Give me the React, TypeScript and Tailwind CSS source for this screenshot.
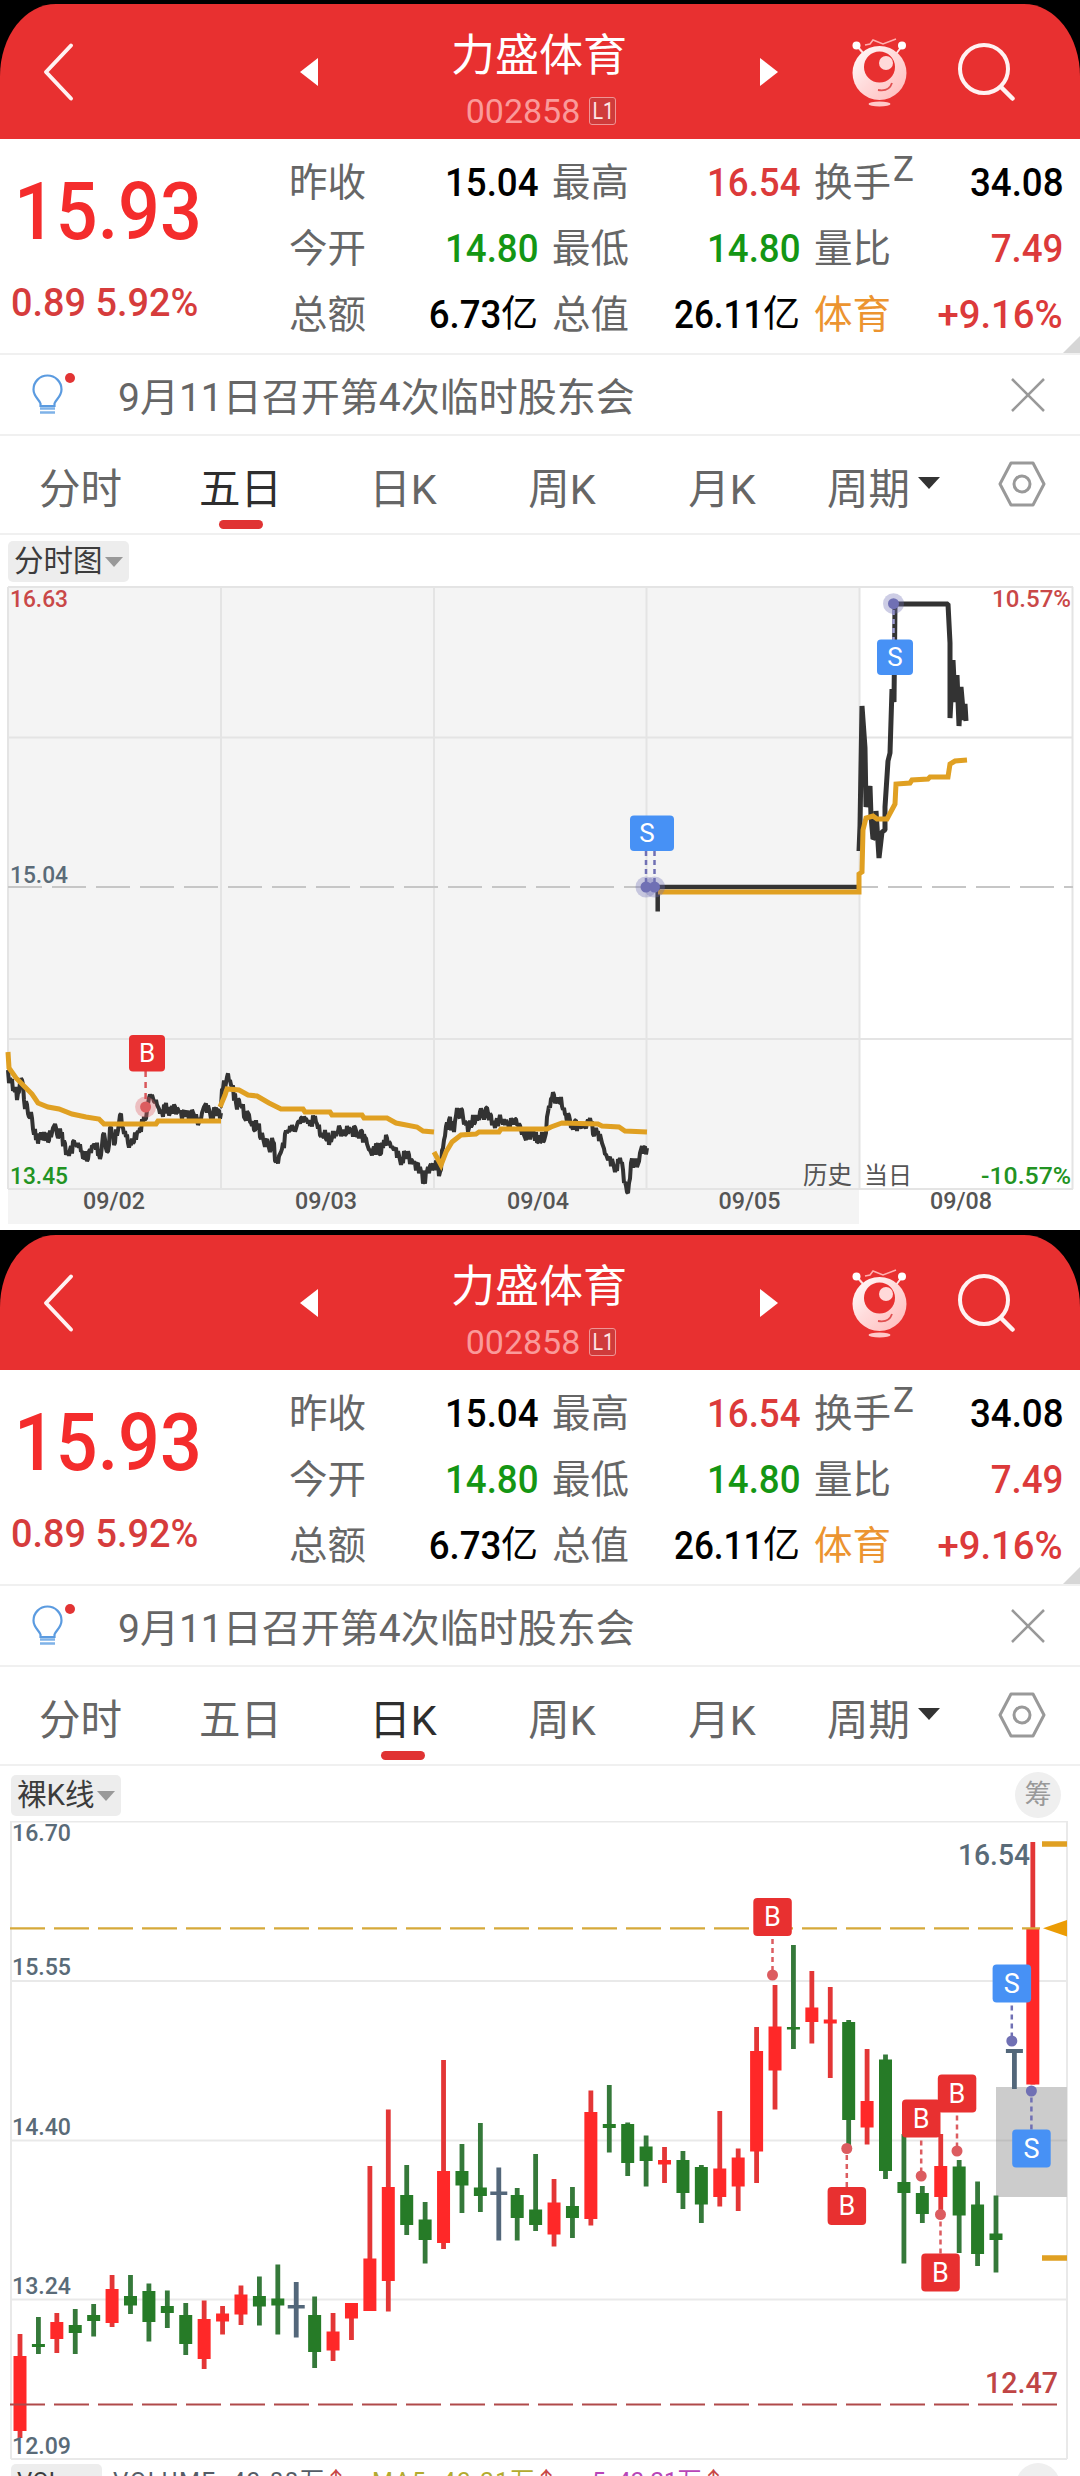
import React from 'react'

type Point = [number, number]

type ScreenProps = {
    active: string
    children: React.ReactNode
}

const tabs = [
    { name: '分时', className: 'w-[161px]' },
    { name: '五日', className: 'w-[159px]' },
    { name: '日K', className: 'w-[166px]' },
    { name: '周K', className: 'w-[152px]' },
    { name: '月K', className: 'w-[168px]' },
]

const stats = [
    [
        { label: '昨收', value: '15.04', color: 'text-black' },
        { label: '最高', value: '16.54', color: 'text-[#dc3a3a]' },
        { label: '换手', sup: 'Z', value: '34.08', color: 'text-black' },
    ],
    [
        { label: '今开', value: '14.80', color: 'text-[#149614]' },
        { label: '最低', value: '14.80', color: 'text-[#149614]' },
        { label: '量比', value: '7.49', color: 'text-[#dc3a3a]' },
    ],
    [
        { label: '总额', value: '6.73', unit: '亿', color: 'text-black' },
        { label: '总值', value: '26.11', unit: '亿', color: 'text-black', scale: 'scale-x-[0.9]' },
        { label: '体育', labelColor: 'text-[#ec9430]', value: '+9.16%', color: 'text-[#dc3a3a]', scale: 'scale-x-[0.98]' },
    ],
]

// intraday price, one list per trading day
const priceLines: Point[][] = [
    [[8,484],[9,497],[16,501],[17,514],[22,494],[24,514],[29,531],[32,532],[36,554],[44,546],[46,554],[53,542],[61,549],[67,566],[78,557],[87,575],[95,559],[101,569],[104,547],[107,566],[111,541],[114,559],[120,529],[123,542],[128,557],[137,547],[143,537],[147,524],[151,511],[156,514],[162,526],[168,521],[170,527],[177,522],[185,531],[194,529],[198,539],[204,521],[210,527],[221,527]],
    [[220,521],[223,503],[227,491],[232,501],[236,517],[242,522],[250,536],[258,541],[263,552],[269,562],[273,556],[276,576],[281,566],[288,544],[297,539],[309,534],[316,536],[322,547],[330,554],[337,546],[349,542],[358,549],[366,552],[370,564],[383,562],[387,552],[394,564],[400,574],[406,569],[415,577],[424,594],[433,577]],
    [[434,577],[440,586],[444,554],[449,534],[454,546],[457,522],[463,531],[469,542],[476,529],[488,527],[494,537],[499,534],[507,537],[518,539],[524,549],[534,547],[538,556],[546,547],[548,526],[552,512],[561,511],[566,529],[572,541],[589,536],[595,546],[602,557],[608,574],[614,581],[621,577],[625,596],[628,607],[631,577],[635,581],[640,567],[647,562]],
]

const todayLine: Point[] = [[859,265],[860,240],[862,120],[865,162],[866,221],[870,200],[871,230],[873,253],[876,250],[876,225],[879,272],[882,246],[885,244],[885,221],[888,175],[890,167],[892,103],[894,116],[895,18],[948,18],[950,57],[950,132],[953,74],[955,116],[957,89],[959,140],[961,101],[963,124],[964,134],[965,118],[966,135]]

const avgLines: Point[][] = [
    [[8,466],[9,482],[16,492],[25,501],[32,508],[38,517],[48,521],[59,523],[72,528],[86,531],[99,533],[104,538],[156,538],[158,535],[221,535]],
    [[220,521],[225,509],[227,503],[239,504],[248,509],[257,510],[269,517],[281,523],[303,523],[305,526],[330,526],[332,529],[362,529],[364,532],[387,532],[396,537],[417,541],[423,545],[434,546]],
    [[434,566],[441,579],[446,566],[452,556],[461,549],[476,548],[479,546],[499,546],[501,543],[547,543],[551,541],[562,537],[598,538],[602,540],[619,541],[625,545],[647,546]],
    [[658,306],[859,306],[859,288],[862,286],[863,244],[866,232],[873,230],[877,233],[887,233],[895,218],[896,198],[910,197],[912,194],[928,193],[930,191],[948,191],[950,178],[955,175],[967,174]],
]

// kind, high, body top, body bottom, low
const candles: [string, number, number, number, number][] = [
    ['r',513,535,610,617],['g',496,523,526,533],['r',492,501,518,532],['g',488,504,512,533],['g',483,494,500,515.5],
    ['r',454,468,502,506],['g',454,475,484.5,493],['g',462.5,470,501,520.5],['g',469.5,485,492,507],['g',482,494,523,534],
    ['r',479.5,498,538,548],['r',485,492.5,500.5,513.5],['r',464.5,473.5,493.5,504],['g',455.5,475,485.5,504.5],['g',443.5,477.5,484.5,513.5],
    ['n',461,484,487.5,516.5],['g',475.5,494,531,547],['r',492,510.5,529.5,540],['r',482,482,497.5,519],['r',345,437.5,490,490],
    ['r',288.5,366,460,490.5],['g',344,374,404,414],['g',381,398.5,419,442.5],['r',239,350,422,428],['g',323,350,364.5,392],
    ['g',302,366.5,375,391],['n',346.5,370.5,374,419.5],['g',367,374,397,419.5],['g',333,388.5,404,410],['r',358,381.5,413.5,425.5],
    ['g',366,385,397,417],['r',269.5,291,398,404.5],['g',264,303,307,331.5],['g',301.5,303,342,355],['g',314.5,325.5,340,365.5],
    ['r',326,339,343.5,362],['g',330,339,372,388],['g',344,346,383.5,402],['r',290,347.5,376,385.5],['r',327.5,336.5,365.5,390],
    ['r',206,230,330.5,362],['r',164,205.5,249.5,288.5],['g',124,206,208.5,228],['r',150,186.5,201,222.5],['r',166,198.5,202.5,257],
    ['g',199,201,299,327],['r',228,280,306.5,323.5],['g',233.5,238.5,350,358],['g',313,361,372,442.5],['g',365,372,393,402],
    ['r',313,345,376,395],['g',339,345.5,394.5,432],['g',360.5,383.5,433,445],['g',374.5,412.5,419,451.5],['n',228,228,232,268],
    ['r',21,108,263.5,263.5],
]

const bodyColor: Record<string, string> = { r: '#ff2828', g: '#267b27', n: '#53677a' }
const wickColor: Record<string, string> = { r: '#e33636', g: '#35793a', n: '#53677a' }

const marks = [
    { type: 'B', x: 772.5, top: 77, dot: 154 },
    { type: 'B', x: 846.8, top: 366, dot: 327.5 },
    { type: 'B', x: 957, top: 253.5, dot: 330 },
    { type: 'B', x: 921.2, top: 278.5, dot: 355 },
    { type: 'B', x: 940.5, top: 432.5, dot: 393.5 },
    { type: 'S', x: 1011.8, top: 143.5, dot: 220 },
    { type: 'S', x: 1031.4, top: 308.5, dot: 270 },
]

const markFill: Record<string, string> = { B: '#e83030', S: '#4791f5' }
const dotFill: Record<string, string> = { B: '#dc5c60', S: '#7070b4' }

// puts small ticks between the points so the line looks like minute data
function jagged(points: Point[]) {
    const out: Point[] = [points[0]]
    let n = 0
    for (let i = 1; i < points.length; i++) {
        const [x0, y0] = points[i - 1]
        const [x1, y1] = points[i]
        const steps = Math.max(1, Math.round(x1 - x0))
        for (let s = 1; s <= steps; s++) {
            n++
            const noise = s === steps ? 0 : Math.round(Math.sin(n * 12.9898 + n * n) * 2) * 2.8
            out.push([x0 + ((x1 - x0) * s) / steps, y0 + ((y1 - y0) * s) / steps + noise])
        }
    }
    return out
}

function toPoints(points: Point[]) {
    return points.map((p) => p.join(',')).join(' ')
}

function Mascot() {
    return (
        <svg width="56" height="70" viewBox="0 0 56 70" fill="none">
            <defs>
                <linearGradient id="ball" x1="0" y1="0" x2="1" y2="1">
                    <stop offset="0" stopColor="#fff" />
                    <stop offset="0.45" stopColor="#ffdcdc" />
                    <stop offset="1" stopColor="#ffb9b9" />
                </linearGradient>
            </defs>
            <path d="M5 9L12 17M50 9L44 17" stroke="#ffe3e3" strokeWidth="2" />
            <path d="M13 8l5-1 3-4 10 4 13-5" stroke="#ffb0b0" strokeWidth="1.5" />
            <circle cx="4.5" cy="8.5" r="4" fill="#fff" />
            <circle cx="50" cy="8.5" r="4" fill="#fff" />
            <circle cx="27.5" cy="36" r="27" fill="url(#ball)" />
            <circle cx="27.5" cy="30" r="15.5" fill="#e83030" />
            <circle cx="34" cy="26" r="7" fill="#ffd9d9" />
            <path d="M26 53q11 2 14-7" stroke="#e05050" strokeWidth="1.8" />
            <ellipse cx="27.5" cy="67" rx="11" ry="2.4" fill="#ffc9c9" />
        </svg>
    )
}

function Header() {
    return (
        <div className="bg-black pt-1">
            <div className="flex h-[135px] items-center rounded-t-[56px_72px] bg-[#e83030] pl-[42px]">
                <svg width="33" height="60" viewBox="0 0 33 60" fill="none">
                    <path d="M29 3.5L4 30L29 56.5" stroke="#fff2f2" strokeWidth="4" strokeLinecap="round" strokeLinejoin="round" />
                </svg>
                <svg className="ml-[225px]" width="18" height="28" viewBox="0 0 18 28">
                    <path d="M0 14L18 0V28z" fill="#fff" />
                </svg>
                <div className="mx-auto flex w-[442px] flex-col items-center pt-[14px]">
                    <h1 className="h-[58px] text-[44px] leading-[58px] text-white">力盛体育</h1>
                    <div className="mt-[7px] flex h-[38px] items-center gap-[9px] pl-[4px]">
                        <span className="text-[34px] leading-[38px] text-[#fa9a9a]">002858</span>
                        <span className="flex h-7 w-[27px] items-center justify-center rounded-[3px] border border-[#ef9595] bg-[#cf3b3b] text-[24px] leading-none text-[#ffe6e6]">
                            <span className="scale-x-[0.82]">L1</span>
                        </span>
                    </div>
                </div>
                <svg width="18" height="28" viewBox="0 0 18 28">
                    <path d="M18 14L0 0V28z" fill="#fff" />
                </svg>
                <div className="ml-[74px]">
                    <Mascot />
                </div>
                <svg className="mr-[65px] ml-[49px]" width="58" height="60" viewBox="0 0 58 60" fill="none">
                    <circle cx="27" cy="27" r="24" stroke="#fff2f2" strokeWidth="4" />
                    <path d="M44 45L55.5 56.5" stroke="#fff2f2" strokeWidth="4.5" strokeLinecap="round" />
                </svg>
            </div>
        </div>
    )
}

function Quote() {
    return (
        <div className="relative flex h-[216px] border-b-2 border-[#f0f0f0]">
            <div className="w-[289px] shrink-0 pt-[24px] pl-[14px] text-[#f42c2c]">
                <div className="h-[96px] origin-left scale-x-[0.92] text-[80px] leading-[98px] font-medium">15.93</div>
                <div className="-ml-[3px] mt-[24px] origin-left scale-x-[0.97] text-[39px] leading-[40px] font-medium whitespace-nowrap text-[#d63c3c]">0.89 5.92%</div>
            </div>
            <div className="w-[774px] pt-[11px]">
                {stats.map((row, i) => (
                    <div key={i} className="grid h-[66px] grid-cols-[249px_248px_249px] gap-x-[14px]">
                        {row.map((item) => (
                            <div key={item.label} className="flex h-[66px] items-center justify-between">
                                <span className={`flex text-[38.5px] ${item.labelColor || 'text-[#666]'}`}>
                                    {item.label}
                                    {item.sup && <sup className="top-[-2px] ml-[2px] text-[35px] leading-none">{item.sup}</sup>}
                                </span>
                                <span className={`flex items-center text-[39px] ${item.color}`}>
                                    <span className={`origin-right font-medium ${item.scale || 'scale-x-[0.94]'}`}>{item.value}</span>
                                    {item.unit && <span className="text-[37px]">{item.unit}</span>}
                                </span>
                            </div>
                        ))}
                    </div>
                ))}
            </div>
            <svg className="absolute right-0 bottom-0" width="17" height="17" viewBox="0 0 17 17">
                <path d="M17 0V17H0z" fill="#d6d6d6" />
            </svg>
        </div>
    )
}

function Notice() {
    return (
        <div className="flex h-[81px] items-center border-b-2 border-[#f0f0f0] pl-[30px]">
            <svg width="46" height="46" viewBox="0 0 46 46" fill="none">
                <path d="M10.500 31.500C9.500 28 3.500 24.500 3.500 17.500a14 14 0 0 1 28 0C31.500 24.500 25.500 28 24.500 31.500V34H10.500z" stroke="#5b9be0" strokeWidth="2.200" />
                <path d="M10 36.500H25M10 40.500H25" stroke="#7fb2e8" strokeWidth="2.500" />
                <circle cx="40" cy="6" r="5" fill="#e23434" />
            </svg>
            <p className="ml-[42px] pt-[6px] text-[39px] leading-[60px] text-[#666]">9月11日召开第4次临时股东会</p>
            <svg className="mr-[34px] ml-auto" width="36" height="36" viewBox="0 0 36 36">
                <path d="M2 2L34 34M34 2L2 34" stroke="#999" strokeWidth="2.500" />
            </svg>
        </div>
    )
}

function Tabs({ active }: { active: string }) {
    return (
        <div className="flex h-[99px] items-center border-b-2 border-[#f0f0f0] pb-[1px]">
            {tabs.map((tab) => (
                <div
                    key={tab.name}
                    className={`relative flex h-full items-center justify-center pt-[12px] text-[41.5px] ${tab.className} ${active === tab.name ? 'text-[#2e2e2e]' : 'text-[#666]'}`}
                >
                    {tab.name}
                    {active === tab.name && <span className="absolute bottom-[3px] h-[9px] w-11 rounded-full bg-[#e03333]" />}
                </div>
            ))}
            <div className="ml-[21px] flex items-center pt-[12px] text-[41.5px] text-[#666]">
                周期
                <svg className="mb-[14px] ml-[8px]" width="22" height="12" viewBox="0 0 22 12">
                    <path d="M0 0H22L11 12z" fill="#333" />
                </svg>
            </div>
            <svg className="mr-[34px] ml-auto" width="48" height="46" viewBox="0 0 48 46" fill="none" stroke="#999" strokeWidth="3">
                <path d="M13 2H35L46 23L35 44H13L2 23z" strokeLinejoin="round" />
                <circle cx="24" cy="23" r="8" />
            </svg>
        </div>
    )
}

function Select({ name }: { name: string }) {
    return (
        <div className="flex h-[41px] items-center gap-[2px] rounded-[5px] bg-[#ededed] px-[6px] text-[29.5px] leading-none text-[#3c3c3c]">
            <span>{name}</span>
            <svg width="18" height="10" viewBox="0 0 18 10">
                <path d="M0 0H18L9 10z" fill="#999" />
            </svg>
        </div>
    )
}

function Screen({ active, children }: ScreenProps) {
    return (
        <section className="bg-white">
            <Header />
            <Quote />
            <Notice />
            <Tabs active={active} />
            {children}
        </section>
    )
}

type LabelProps = {
    x: number
    y: number
    w: number
    size?: number
    fill: string
    text: string
}

function Label({ x, y, w, size = 24, fill, text }: LabelProps) {
    return (
        <text x={x} y={y} fontSize={size} fontWeight="500" fill={fill} textLength={w} lengthAdjust="spacingAndGlyphs">
            {text}
        </text>
    )
}

function FiveDayChart() {
    return (
        <svg className="block" width="1080" height="644" viewBox="0 0 1080 644" fill="none">
            <rect x="8" y="1" width="851" height="637" fill="#f4f4f4" />
            <g stroke="#e4e4e4" strokeWidth="2">
                <path d="M8 1H1073M8 151.500H1073M8 453H1073M8 603H1073" />
                <path d="M8 1V603M221 1V603M434 1V603M646.500 1V603M859.500 1V603M1072.500 1V603" />
            </g>
            <path d="M8 301H1073" stroke="#c6c6c6" strokeWidth="2" strokeDasharray="34 10" />

            {priceLines.map((line, i) => (
                <polyline key={i} points={toPoints(jagged(line))} stroke="#333" strokeWidth="4" strokeLinejoin="bevel" />
            ))}
            <path d="M647 301H858M657.700 301V325.500" stroke="#333" strokeWidth="4.500" />
            <polyline points={toPoints(todayLine)} stroke="#333" strokeWidth="5" strokeLinejoin="bevel" />
            {avgLines.map((line, i) => (
                <polyline key={i} points={toPoints(line)} stroke="#e0a022" strokeWidth="5" />
            ))}

            <path d="M145.600 485V515" stroke="#d9575b" strokeWidth="2.500" strokeDasharray="6 5" />
            <circle cx="145.600" cy="521" r="10.500" fill="#dc5c60" opacity="0.35" />
            <circle cx="145.600" cy="521" r="5.500" fill="#dc5c60" />
            <rect x="129" y="449" width="36" height="36.500" rx="4" fill="#e83030" />
            <text x="147" y="476" fontSize="26" textAnchor="middle" fill="#fff">B</text>

            <path d="M646 265V296M654.500 265V296" stroke="#7070b4" strokeWidth="2.500" strokeDasharray="5 4" />
            <g fill="#7070b4">
                <circle cx="646" cy="301" r="10.500" opacity="0.35" />
                <circle cx="654.500" cy="301" r="10.500" opacity="0.35" />
                <circle cx="646" cy="301" r="5.500" />
                <circle cx="654.500" cy="301" r="5.500" />
            </g>
            <rect x="630" y="229.500" width="44" height="35.500" rx="4" fill="#4791f5" />
            <text x="647" y="256" fontSize="26" textAnchor="middle" fill="#fff">S</text>

            <path d="M893.500 24V54" stroke="#9a9ad0" strokeWidth="2.500" strokeDasharray="5 4" />
            <circle cx="893.500" cy="17.700" r="10.500" fill="#7070b4" opacity="0.35" />
            <circle cx="893.500" cy="17.700" r="5.500" fill="#7070b4" />
            <rect x="877" y="53.500" width="36" height="35.500" rx="4" fill="#4791f5" />
            <text x="895" y="80" fontSize="26" textAnchor="middle" fill="#fff">S</text>

            <Label x={10} y={20.5} w={58} fill="#c94848" text="16.63" />
            <Label x={10} y={297} w={58} fill="#5a6b78" text="15.04" />
            <Label x={10} y={598} w={58} fill="#229322" text="13.45" />
            <Label x={992} y={21} w={79} fill="#c94848" text="10.57%" />
            <Label x={981} y={597.5} w={90} fill="#229322" text="-10.57%" />
            <text x="803" y="598" fontSize="24.500" fill="#555">历史</text>
            <text x="864" y="598" fontSize="24" fill="#555">当日</text>
            <Label x={83} y={622.5} w={62} fill="#555" text="09/02" />
            <Label x={295} y={622.5} w={62} fill="#555" text="09/03" />
            <Label x={507} y={622.5} w={62} fill="#555" text="09/04" />
            <Label x={718.5} y={622.5} w={62} fill="#555" text="09/05" />
            <Label x={930} y={622.5} w={62} fill="#555" text="09/08" />
        </svg>
    )
}

function DayChart() {
    return (
        <svg className="block" width="1080" height="640" viewBox="0 0 1080 640" fill="none">
            <path d="M11 0.500H1067M11 160H1067M11 319.500H1067M11 478.500H1067M11 638H1067M11 0V638M1067 0V638" stroke="#e9e9e9" strokeWidth="2" />
            <rect x="996" y="266" width="71" height="110" fill="#ccc" />
            <path d="M996 319.500H1067" stroke="#bfbfbf" strokeWidth="2" />

            {candles.map(([kind, high, top, bottom, low], i) => {
                const x = 20 + i * 18.415
                const w = kind === 'n' ? 17 : 13
                return (
                    <g key={i}>
                        <rect x={x - 2.4} y={high} width={4.8} height={low - high} fill={wickColor[kind]} />
                        <rect x={x - w / 2} y={top} width={w} height={bottom - top} fill={bodyColor[kind]} />
                    </g>
                )
            })}

            <path d="M10 107.300H1040" stroke="#d6a93a" strokeWidth="2.200" strokeDasharray="35 9" />
            <path d="M10 583.500H1057" stroke="#b04a4a" strokeWidth="2.200" strokeDasharray="35 9" />
            <path d="M1042 23H1067M1042 437H1067" stroke="#e0a022" strokeWidth="5.500" />
            <path d="M1043 107.300L1067 99V115.500z" fill="#eb9c05" />

            {marks.map((m, i) => {
                const below = m.dot < m.top
                return (
                    <g key={i}>
                        <path
                            d={below ? `M${m.x} ${m.top}V${m.dot}` : `M${m.x} ${m.top + 41}V${m.dot}`}
                            stroke={dotFill[m.type]}
                            strokeWidth="2.500"
                            strokeDasharray="5 4"
                        />
                        <circle cx={m.x} cy={m.dot} r="5.500" fill={dotFill[m.type]} />
                        <rect x={m.x - 19.2} y={m.top} width="38.500" height="38" rx="4" fill={markFill[m.type]} />
                        <text x={m.x} y={m.top + 28} fontSize="27" textAnchor="middle" fill="#fff">{m.type}</text>
                    </g>
                )
            })}

            <Label x={12} y={19.5} w={59} fill="#5a6b78" text="16.70" />
            <Label x={12} y={154} w={59} fill="#5a6b78" text="15.55" />
            <Label x={12} y={314} w={59} fill="#5a6b78" text="14.40" />
            <Label x={12} y={473} w={59} fill="#5a6b78" text="13.24" />
            <Label x={12} y={633} w={59} fill="#5a6b78" text="12.09" />
            <Label x={958} y={44} w={72} size={29} fill="#5a6b78" text="16.54" />
            <Label x={985} y={572} w={73} size={29} fill="#c04545" text="12.47" />
        </svg>
    )
}

function App() {
    return (
        <main className="h-[2476px] w-[1080px] overflow-hidden bg-white font-['Roboto','Noto_Sans_CJK_SC',sans-serif]">
            <Screen active="五日">
                <div className="flex h-[51px] items-start pt-[6px] pl-2">
                    <Select name="分时图" />
                </div>
                <FiveDayChart />
            </Screen>
            <div className="h-px bg-black" />
            <Screen active="日K">
                <div className="flex h-[55px] items-start justify-between pt-[6px] pr-[19px] pl-[11px]">
                    <div className="pt-[3px]">
                        <Select name="裸K线" />
                    </div>
                    <div className="flex size-[46px] items-center justify-center rounded-full bg-[#efefef] text-[27px] leading-none text-[#999]">筹</div>
                </div>
                <DayChart />
                <div className="flex items-start pt-[3px] pl-[11px] text-[24px] leading-[35px]">
                    <div className="w-[91px] rounded-[5px] bg-[#ededed] pl-[6px] text-[#3c3c3c]">VOL</div>
                    <span className="ml-[11px] w-[243px] whitespace-nowrap text-[#555c66]"><span className="tracking-[1.6px]">VOLUME: 43.88</span>万<span className="text-[#c94848]">↑</span></span>
                    <span className="ml-[16px] w-[192px] whitespace-nowrap text-[#b3ab30]"><span className="tracking-[1.6px]">MA5: 43.21</span>万<span className="text-[#c94848]">↑</span></span>
                    <span className="ml-[28px] whitespace-nowrap text-[#b846b8]">5: 43.21万<span className="text-[#c94848]">↑</span></span>
                    <div className="-mt-px mr-[20px] ml-auto flex size-[44px] items-start justify-center rounded-full bg-[#efefef]" />
                </div>
            </Screen>
        </main>
    )
}

export default App
